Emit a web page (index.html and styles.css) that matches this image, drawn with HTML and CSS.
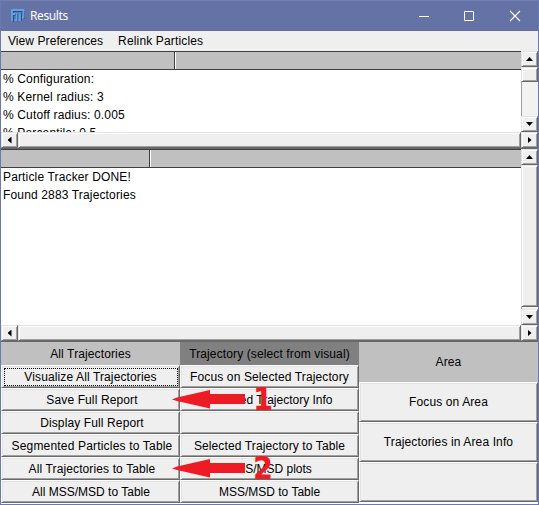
FILE: index.html
```html
<!DOCTYPE html>
<html lang="en">
<head>
<meta charset="utf-8">
<title>Results</title>
<link rel="stylesheet" href="styles.css">
</head>
<body>
<div class="window">
  <header class="titlebar">
    <svg class="logo" width="14" height="14" viewBox="0 0 14 14" fill="none"><path d="M2 13V2h11M2 6h3M6 5v7H4M10 4v7H8M13 2v8" stroke="#34508a" stroke-width="2"/><path d="M1 12.500V1h12M1 5h3M5.500 4v7.500H3.500M9 4v7H7.500M12.500 1v7.500H11" stroke="#5aa5e6" stroke-width="1.800"/></svg>
    <span class="title">Results</span>
    <svg class="controls" width="118" height="12" viewBox="0 0 118 12" fill="none" stroke="#fff"><path d="M0 6.500h10M45.500 1.500h9v9h-9z"/><path d="M91 1l10 10M101 1L91 11" stroke-width="1.200"/></svg>
  </header>
  <nav class="menu"><span>View Preferences</span><span>Relink Particles</span></nav>

  <section class="pane config">
    <div class="content">
      <div class="head"><i></i></div>
      <div class="lines"><p>% Configuration:</p><p>% Kernel radius: 3</p><p>% Cutoff radius: 0.005</p><p>% Percentile: 0.5</p></div>
    </div>
    <div class="vscroll"><b class="arrow up"></b><b class="thumb"></b><span class="track"></span><b class="arrow down"></b></div>
    <div class="hscroll"><b class="arrow left"></b><b class="thumb"></b><b class="arrow right"></b></div>
  </section>

  <section class="pane log">
    <div class="content">
      <div class="head"><i></i></div>
      <div class="lines"><p>Particle Tracker DONE!</p><p>Found 2883 Trajectories</p></div>
    </div>
    <div class="vscroll"><b class="arrow up"></b><b class="thumb"></b><span class="track"></span><b class="arrow down"></b></div>
    <div class="hscroll"><b class="arrow left"></b><b class="thumb"></b><b class="arrow right"></b></div>
  </section>

  <main class="actions">
    <div class="column all">
      <div class="label">All Trajectories</div>
      <div class="btn focused">Visualize All Trajectories</div>
      <div class="btn">Save Full Report</div>
      <div class="btn">Display Full Report</div>
      <div class="btn wide">Segmented Particles to Table</div>
      <div class="btn">All Trajectories to Table</div>
      <div class="btn tight">All MSS/MSD to Table</div>
    </div>
    <div class="column">
      <div class="label dark">Trajectory (select from visual)</div>
      <div class="btn">Focus on Selected Trajectory</div>
      <div class="btn tight">Selected Trajectory Info</div>
      <div class="btn"></div>
      <div class="btn">Selected Trajectory to Table</div>
      <div class="btn tight">MSS/MSD plots</div>
      <div class="btn tight">MSS/MSD to Table</div>
    </div>
    <div class="column area">
      <div class="label">Area</div>
      <div class="btn">Focus on Area</div>
      <div class="btn">Trajectories in Area Info</div>
      <div class="btn"></div>
    </div>
  </main>
</div>
<div class="callout one"><svg width="74" height="20" viewBox="0 0 74 20"><path d="M0 9.500L5 7.500L38 0V4H73V14H38V18.500L5 11z" fill="#ed1c24"/></svg><span>1</span></div>
<div class="callout two"><svg width="74" height="20" viewBox="0 0 74 20"><path d="M0 9.500L5 7.500L38 0V4H73V14H38V18.500L5 11z" fill="#ed1c24"/></svg><span>2</span></div>
</body>
</html>
```
FILE: styles.css
```css
* { box-sizing: border-box; }
body { margin: 0; font: 12px/18px "Liberation Sans", Arial, sans-serif; color: #000; overflow: hidden; }
.window { width: 539px; height: 505px; border: 1px solid #6b7aae; border-top-color: #7080b0; background: #fff; }
.titlebar { height: 30px; background: #6472a5; display: flex; align-items: center; color: #fff; padding-left: 10px; }
.logo { margin-top: -1px; }
.title { font: 12px/16px "Noto Sans", sans-serif; margin-left: 5px; letter-spacing: -.4px; }
.controls { margin-left: auto; margin-top: -1px; margin-right: 1px; }
.menu { height: 20px; background: #efefef; display: flex; gap: 15px; padding-left: 7px; line-height: 20px; letter-spacing: .08px; white-space: nowrap; }
.menu span + span { letter-spacing: .15px; }

.pane { display: grid; grid-template-columns: 1fr 17px; background: #fff; }
.config { height: 98px; grid-template-rows: 81px 17px; }
.log { height: 193px; grid-template-rows: 176px 17px; }
.content { overflow: hidden; min-width: 0; }
.head { height: 19px; background: #c0c0c0; border-top: 1px solid #404040; border-bottom: 1px solid #404040; }
.head i { display: block; height: 17px; width: 175px; border-right: 1px solid #fff; box-shadow: inset -1px 0 #404040; }
.log .head i { width: 150px; }
.lines { letter-spacing: .15px; padding-left: 2px; }
.lines p { margin: 0; height: 18px; white-space: nowrap; }

.vscroll { display: flex; flex-direction: column; background: #f2f2f2; }
.vscroll .thumb { height: 15px; }
.log .vscroll .thumb { height: 142px; }
.track { flex: 1; border-left: 1px solid #a0a0a0; }
.hscroll { grid-column: 1 / 3; display: flex; background: #efefef; border-bottom: 1px solid #696969; }
.hscroll .thumb { flex: 1; }
.thumb, .arrow { background: #efefef; border: 1px solid; border-color: #e3e3e3 #696969 #696969 #e3e3e3; box-shadow: inset 1px 1px #fff, inset -1px -1px #a0a0a0; }
.arrow { width: 17px; height: 16px; flex: none; display: grid; place-items: center; }
.arrow::before { content: ""; width: 7px; height: 4px; background: #000; clip-path: polygon(50% 0, 100% 100%, 0 100%); }
.down::before { clip-path: polygon(0 0, 100% 0, 50% 100%); }
.left::before, .right::before { width: 4px; height: 7px; }
.left::before { clip-path: polygon(0 50%, 100% 0, 100% 100%); }
.right::before { clip-path: polygon(0 0, 100% 50%, 0 100%); }

.actions { display: grid; grid-template-columns: 179px 179px 179px; }
.column { display: grid; grid-template-rows: 23px repeat(6, 23px); }
.area { grid-template-rows: 40px 40px 40px 40px; align-content: start; }
.label, .btn { display: flex; align-items: center; justify-content: center; white-space: nowrap; letter-spacing: .12px; }
.label { background: #c0c0c0; }
.dark { background: #808080; }
.btn { background: #efefef; border: 1px solid; border-color: #fff #696969 #696969 #fff; box-shadow: inset 1px 1px #e3e3e3, inset -1px -1px #a0a0a0; }
.all .btn { padding-left: 3px; }
.all .tight { padding-left: 1px; }
.tight { letter-spacing: 0; }
.all .wide { letter-spacing: .18px; }
.all .focused { position: relative; padding-left: 0; }
.focused::after { content: ""; position: absolute; inset: 2px 1px 1px 2px; border: 1px dotted #000; }

.callout { position: absolute; left: 172px; width: 110px; height: 30px; color: #ed1c24; }
.callout svg { position: absolute; left: 0; top: 5px; }
.callout span { position: absolute; left: 81px; top: -2px; font: bold 32px/32px "DejaVu Sans Condensed", "DejaVu Sans", sans-serif; font-stretch: condensed; }
.one { top: 385px; }
.two { top: 454px; }
```
